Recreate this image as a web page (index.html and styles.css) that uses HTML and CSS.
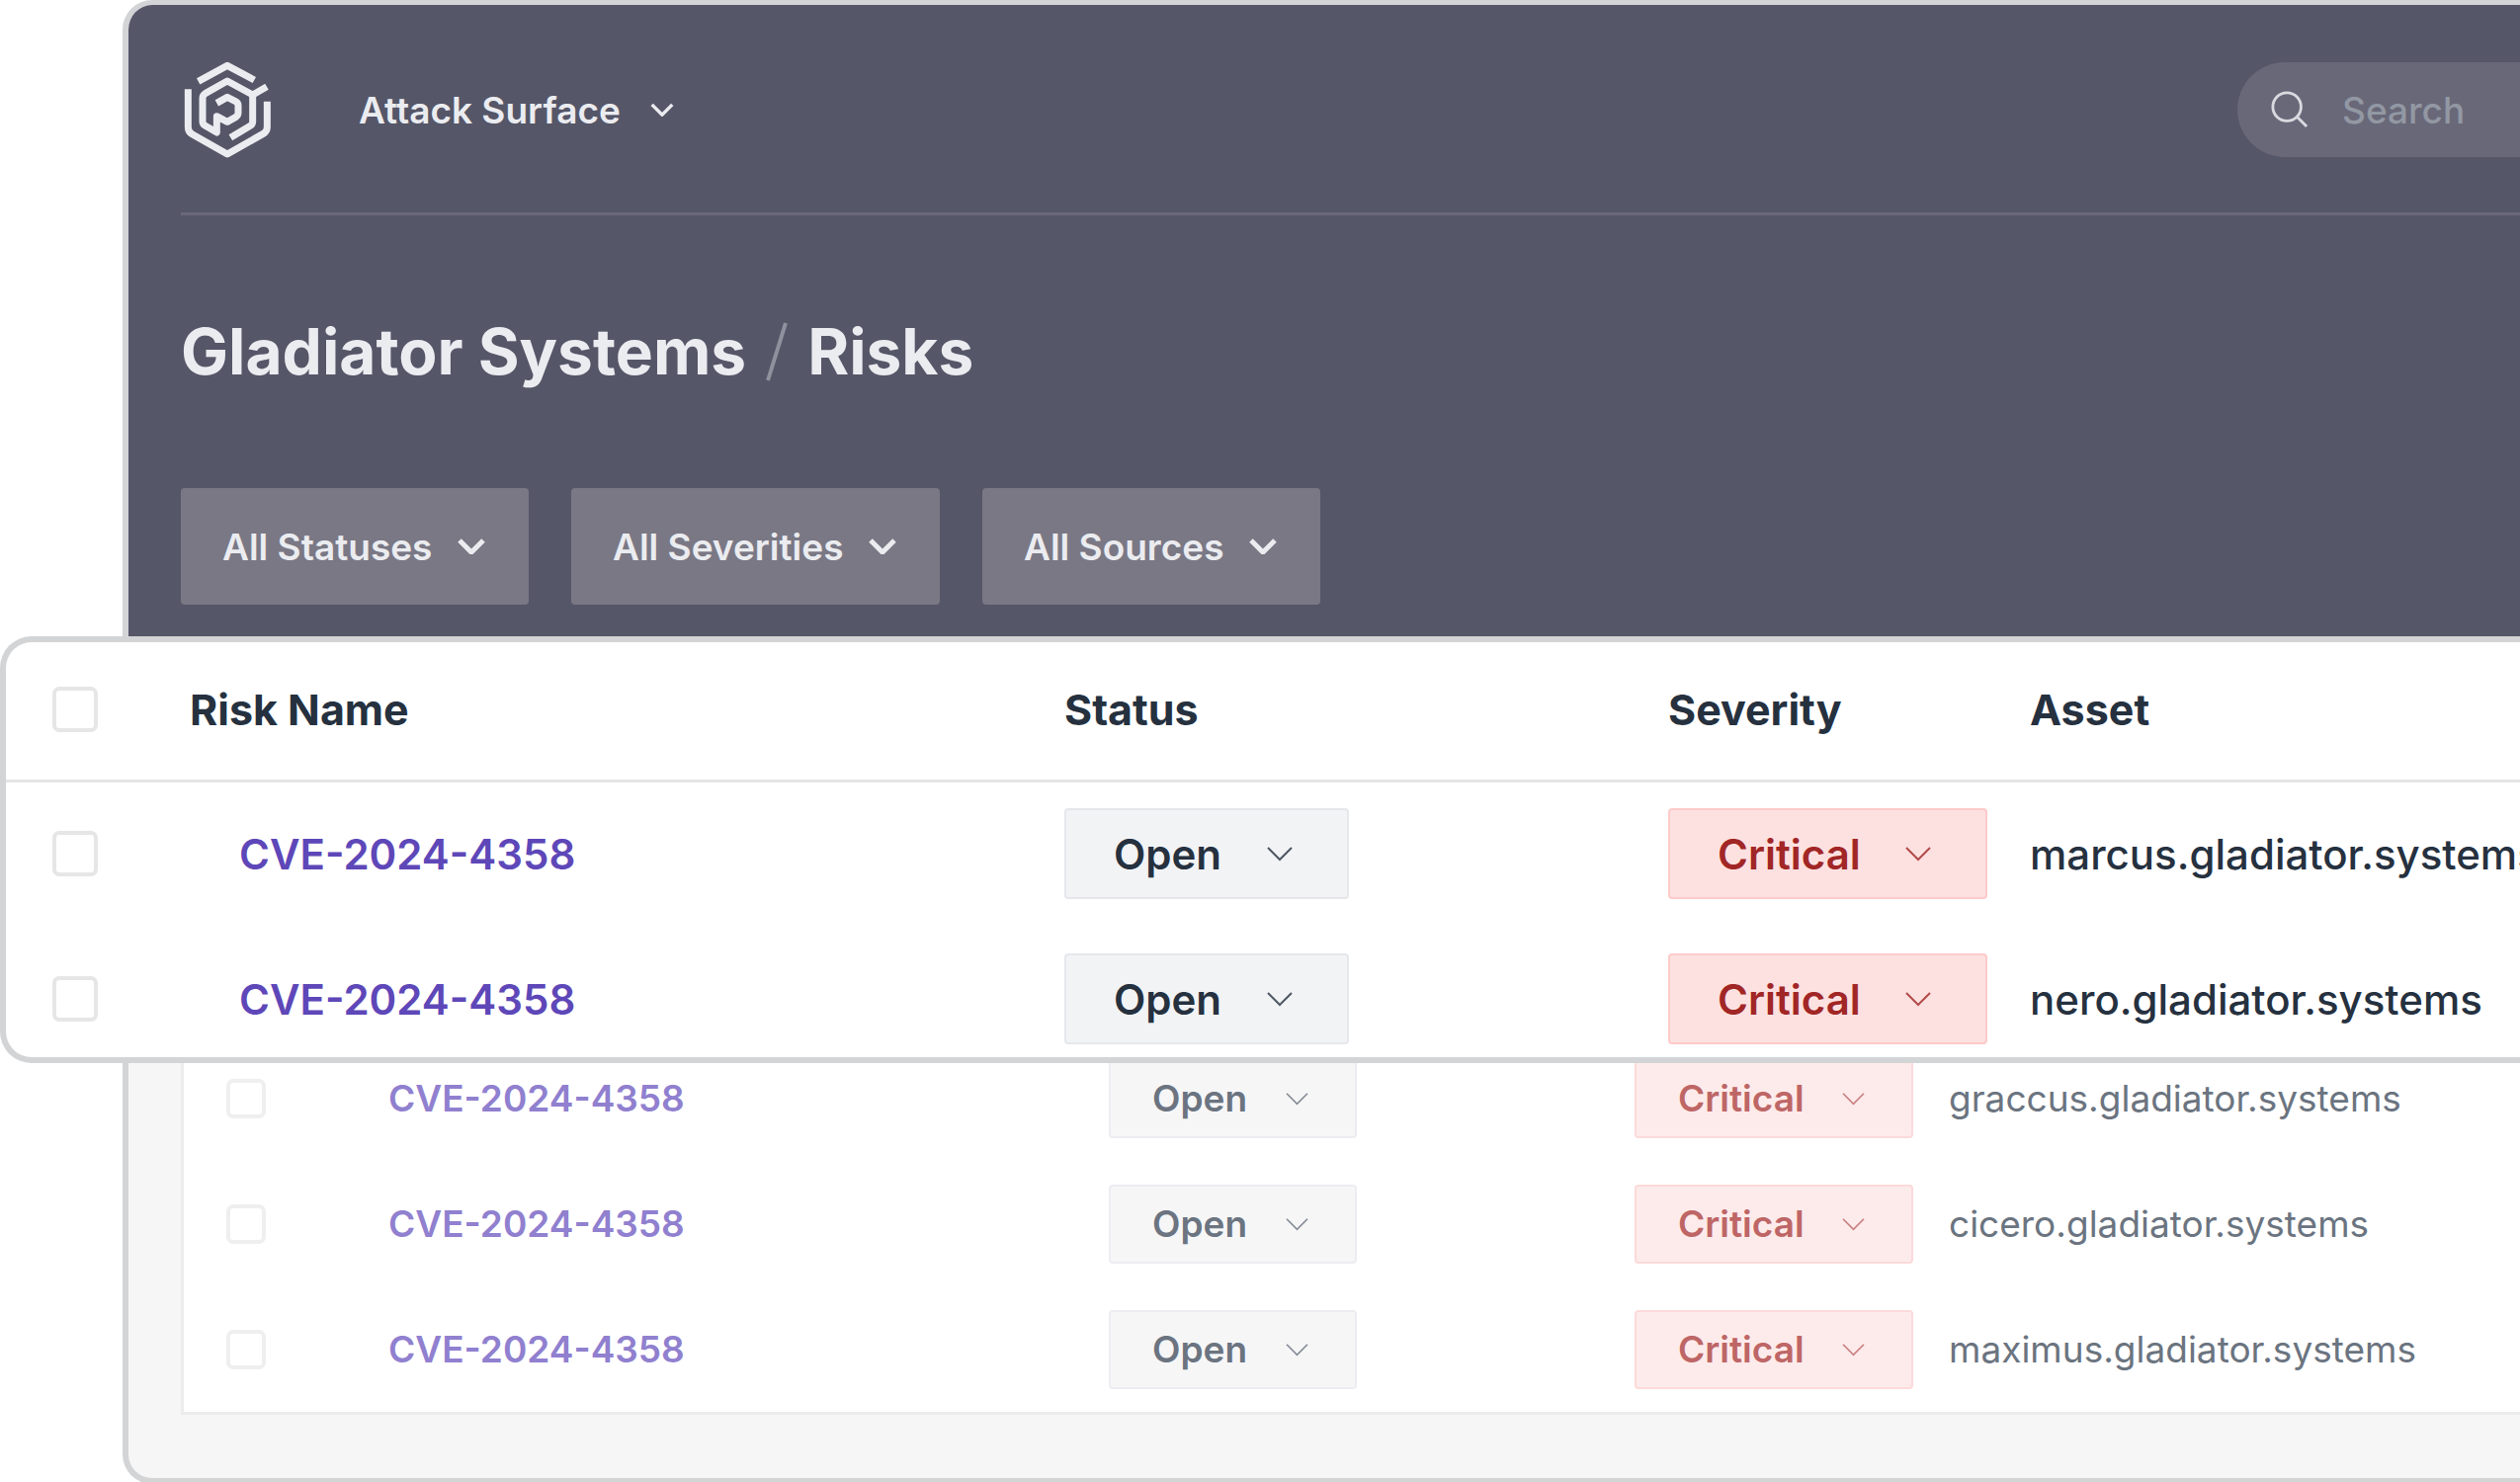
FILE: index.html
```html
<!DOCTYPE html>
<html lang="en">
<head>
<meta charset="utf-8">
<meta name="viewport" content="width=device-width, initial-scale=1">
<title>Gladiator Systems / Risks</title>
<link rel="stylesheet" href="styles.css">
</head>
<body>
<svg class="sprite" aria-hidden="true">
  <symbol id="chevron" viewBox="0 0 28 16"><path d="M2 2 14 14 26 2"/></symbol>
</svg>

<main class="stage">
  <section class="panel">
    <header class="hero">
      <div class="topbar">
        <svg class="logo" viewBox="45 36 270 294" aria-hidden="true">
          <path d="M92 97 180 49 262 93"/>
          <path d="M61 121V236Q61 250 73 257L180 318 289 256Q301 249 301 236V158"/>
          <path d="M300 113 257 138 180 96 113 134Q105 139 105 148V220Q105 227 112 231L148 252V203L180 220 205 206Q213 201 213 193V170Q213 162 205 158L180 145 148 163"/>
          <path d="M257 138V220Q257 228 250 232L190 268"/>
        </svg>
        <button class="product" type="button">Attack Surface
          <svg class="chevron chevron-nav" aria-hidden="true"><use href="#chevron"/></svg>
        </button>
        <div class="search">
          <svg class="search-icon" viewBox="0 0 40 40" aria-hidden="true"><circle cx="17" cy="17" r="15"/><path d="M28 28 38 38"/></svg>
          <input class="search-input" type="search" placeholder="Search" aria-label="Search">
        </div>
      </div>
      <h1 class="title">Gladiator Systems <svg class="slash" viewBox="0 0 22 60" aria-hidden="true"><path d="M20 1 2 59"/></svg> Risks</h1>
      <div class="filters">
        <div class="picker filter">
          <select aria-label="Filter by status"><option>All Statuses</option></select>
          <svg class="chevron" aria-hidden="true"><use href="#chevron"/></svg>
        </div>
        <div class="picker filter">
          <select aria-label="Filter by severity"><option>All Severities</option></select>
          <svg class="chevron" aria-hidden="true"><use href="#chevron"/></svg>
        </div>
        <div class="picker filter">
          <select aria-label="Filter by source"><option>All Sources</option></select>
          <svg class="chevron" aria-hidden="true"><use href="#chevron"/></svg>
        </div>
      </div>
    </header>

    <div class="card">
      <table class="risks risks-muted">
        <colgroup><col class="col-check"><col class="col-name"><col class="col-status"><col class="col-severity"><col></colgroup>
        <tbody>
          <tr>
            <td><input type="checkbox" aria-label="Select graccus.gladiator.systems"></td>
            <td><a href="#">CVE-2024-4358</a></td>
            <td><div class="picker badge"><select aria-label="Status"><option>Open</option></select><svg class="chevron" aria-hidden="true"><use href="#chevron"/></svg></div></td>
            <td><div class="picker badge critical"><select aria-label="Severity"><option>Critical</option></select><svg class="chevron" aria-hidden="true"><use href="#chevron"/></svg></div></td>
            <td>graccus.gladiator.systems</td>
          </tr>
          <tr>
            <td><input type="checkbox" aria-label="Select cicero.gladiator.systems"></td>
            <td><a href="#">CVE-2024-4358</a></td>
            <td><div class="picker badge"><select aria-label="Status"><option>Open</option></select><svg class="chevron" aria-hidden="true"><use href="#chevron"/></svg></div></td>
            <td><div class="picker badge critical"><select aria-label="Severity"><option>Critical</option></select><svg class="chevron" aria-hidden="true"><use href="#chevron"/></svg></div></td>
            <td>cicero.gladiator.systems</td>
          </tr>
          <tr>
            <td><input type="checkbox" aria-label="Select maximus.gladiator.systems"></td>
            <td><a href="#">CVE-2024-4358</a></td>
            <td><div class="picker badge"><select aria-label="Status"><option>Open</option></select><svg class="chevron" aria-hidden="true"><use href="#chevron"/></svg></div></td>
            <td><div class="picker badge critical"><select aria-label="Severity"><option>Critical</option></select><svg class="chevron" aria-hidden="true"><use href="#chevron"/></svg></div></td>
            <td>maximus.gladiator.systems</td>
          </tr>
        </tbody>
      </table>
    </div>
  </section>

  <section class="spotlight">
    <table class="risks risks-focus">
      <colgroup><col class="col-check"><col class="col-name"><col class="col-status"><col class="col-severity"><col></colgroup>
      <thead>
        <tr>
          <th><input type="checkbox" aria-label="Select all risks"></th>
          <th>Risk Name</th>
          <th>Status</th>
          <th>Severity</th>
          <th>Asset</th>
        </tr>
      </thead>
      <tbody>
        <tr>
          <td><input type="checkbox" aria-label="Select marcus.gladiator.systems"></td>
          <td><a href="#">CVE-2024-4358</a></td>
          <td><div class="picker badge"><select aria-label="Status"><option>Open</option></select><svg class="chevron" aria-hidden="true"><use href="#chevron"/></svg></div></td>
          <td><div class="picker badge critical"><select aria-label="Severity"><option>Critical</option></select><svg class="chevron" aria-hidden="true"><use href="#chevron"/></svg></div></td>
          <td class="asset">marcus.gladiator.systems</td>
        </tr>
        <tr>
          <td><input type="checkbox" aria-label="Select nero.gladiator.systems"></td>
          <td><a href="#">CVE-2024-4358</a></td>
          <td><div class="picker badge"><select aria-label="Status"><option>Open</option></select><svg class="chevron" aria-hidden="true"><use href="#chevron"/></svg></div></td>
          <td><div class="picker badge critical"><select aria-label="Severity"><option>Critical</option></select><svg class="chevron" aria-hidden="true"><use href="#chevron"/></svg></div></td>
          <td class="asset">nero.gladiator.systems</td>
        </tr>
      </tbody>
    </table>
  </section>
</main>
</body>
</html>
```
FILE: styles.css
```css
* { box-sizing: border-box; }

body {
  margin: 0;
  background: #fff;
  font-family: Inter, "Liberation Sans", sans-serif;
  font-size: 37px;
  overflow-x: hidden;
}

.sprite { display: none; }

.stage {
  position: relative;
  display: flex;
  flex-direction: column;
  min-height: 100vh;
}

/* Application window, running off the right edge */
.panel {
  flex: 1;
  display: flex;
  flex-direction: column;
  margin-left: 124px;
  border: 6px solid #d3d4d6;
  border-top-width: 5px;
  border-right: 0;
  border-radius: 30px 0 0 30px;
  background: #f6f6f6;
  overflow: hidden;
}

.hero {
  padding: 0 0 96px 53px;
  background: #555668;
  color: #ebecf0;
}

.topbar {
  display: flex;
  align-items: center;
  height: 213px;
  padding-top: 2px;
  border-bottom: 3px solid #6a687a;
}

.logo {
  width: 90px;
  height: 98px;
  margin: 0 88px 0 2px;
  fill: none;
  stroke: currentColor;
  stroke-width: 21;
  stroke-linejoin: round;
}

.product {
  display: flex;
  align-items: center;
  gap: 30px;
  padding: 0;
  border: 0;
  background: none;
  color: inherit;
  font: inherit;
  font-weight: 600;
}

.chevron {
  width: 28px;
  height: 16px;
  fill: none;
  stroke: currentColor;
  stroke-width: 2;
}

.chevron-nav {
  width: 24px;
  height: 14px;
  stroke-width: 4;
}

.search {
  display: flex;
  align-items: center;
  gap: 34px;
  width: 286px;
  height: 96px;
  margin-left: auto;
  padding-left: 34px;
  border-radius: 48px 0 0 48px;
  background: #696879;
}

.search-icon {
  flex: none;
  width: 38px;
  height: 38px;
  fill: none;
  stroke: #d9dae0;
  stroke-width: 3;
}

.search-input {
  flex: 1;
  min-width: 0;
  padding: 0;
  border: 0;
  background: none;
  color: inherit;
  font: inherit;
  font-weight: 500;
}

.search-input::placeholder { color: #9298a3; }

.title {
  display: flex;
  align-items: center;
  gap: 20px;
  margin: 98px 0;
  font-size: 64px;
  font-weight: 700;
  line-height: 80px;
}

.slash {
  width: 22px;
  height: 60px;
  fill: none;
  stroke: #8f919d;
  stroke-width: 4;
}

.filters {
  display: flex;
  gap: 43px;
}

/* Drop-down with its own chevron drawn over the right padding */
.picker {
  position: relative;
  display: inline-flex;
  vertical-align: top;
}

.picker select {
  appearance: none;
  border: 0;
  border-radius: 4px;
  background: none;
  color: inherit;
  font: inherit;
}

.picker .chevron {
  position: absolute;
  top: 50%;
  transform: translateY(-50%);
  pointer-events: none;
}

.filter select {
  height: 118px;
  padding: 0 97px 0 42px;
  background: #7a7885;
  font-weight: 600;
}

.filter .chevron {
  right: 44px;
  stroke-width: 5;
}

.card {
  margin: 0 0 64px 53px;
  padding-top: 340px;
  border: 3px solid #ececec;
  border-width: 0 0 3px 3px;
  background: #fff;
}

/* Tables */
.risks {
  width: 100%;
  border-collapse: collapse;
  table-layout: fixed;
  white-space: nowrap;
}

.risks th,
.risks td {
  padding: 0;
  text-align: left;
}

.risks a {
  font-weight: 600;
  text-decoration: none;
}

.risks input {
  appearance: none;
  display: block;
  margin: 0;
  border: 4px solid #e6e6e7;
  border-radius: 7px;
  background: #fff;
}

.badge select {
  border: 2px solid #e5e7eb;
  background: #f2f3f5;
  font-weight: 600;
}

.badge .chevron { opacity: 0.8; }

.risks-muted { color: #6b7480; }
.risks-muted a { color: #9080cf; }
.risks-muted tr { height: 127px; }
.risks-muted .col-check { width: 207px; }
.risks-muted .col-name { width: 729px; }
.risks-muted .col-status { width: 532px; }
.risks-muted .col-severity { width: 318px; }
.risks-muted td:first-child { padding-left: 43px; }
.risks-muted input { width: 40px; height: 40px; border-color: #efefef; }
.risks-muted select { height: 80px; padding: 0 108px 0 42px; background: #f6f6f7; border-color: #ecedf1; }
.risks-muted .chevron { right: 48px; width: 25px; height: 14px; }
.risks-muted .critical { color: #be6666; }
.risks-muted .critical select { background: #fdebeb; border-color: #fddada; }

/* Enlarged rows lying over the window */
.spotlight {
  position: absolute;
  top: 644px;
  left: 0;
  right: 0;
  border: 6px solid #d3d4d6;
  border-right: 0;
  border-radius: 32px 0 0 32px;
  background: #fff;
  font-size: 42px;
  overflow: hidden;
}

.risks-focus { color: #26313f; }
.risks-focus a { color: #5e47b8; }
.risks-focus .asset { font-weight: 500; }
.risks-focus thead tr { height: 140px; border-bottom: 3px solid #e6e6e7; }
.risks-focus th { padding-bottom: 2px; font-size: 43px; font-weight: 700; }
.risks-focus td { height: 147px; }
.risks-focus tbody tr:last-child td { height: 133px; padding: 28px 0 13px; }
.risks-focus .col-check { width: 186px; }
.risks-focus .col-name { width: 885px; }
.risks-focus .col-status { width: 611px; }
.risks-focus .col-severity { width: 366px; }
.risks-focus tr td:first-child,
.risks-focus tr th:first-child,
.risks-focus tbody tr:last-child td:first-child { padding-left: 47px; }
.risks-focus tr td:nth-child(2),
.risks-focus tbody tr:last-child td:nth-child(2) { padding-left: 50px; }
.risks-focus input { width: 46px; height: 46px; }
.risks-focus select { height: 92px; padding: 0 126px 0 48px; }
.risks-focus .chevron { right: 56px; }
.risks-focus .critical { color: #a12626; }
.risks-focus .critical select { background: #fde1e1; border-color: #fecaca; }
```
